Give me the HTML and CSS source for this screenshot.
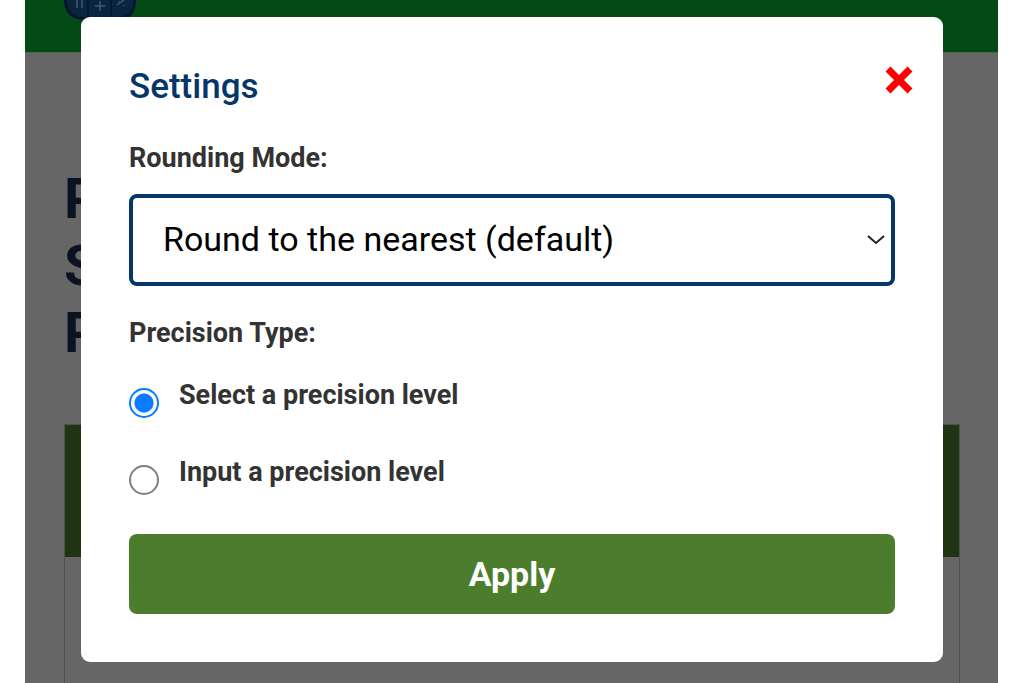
FILE: index.html
```html
<!DOCTYPE html>
<html lang="en">
<head>
<meta charset="utf-8">
<meta name="viewport" content="width=device-width, initial-scale=1">
<title>Settings</title>
<link rel="stylesheet" href="styles.css">
</head>
<body>
<div class="page">
  <header class="topbar">
    <svg class="logo" viewBox="0 0 72 22" aria-hidden="true">
      <path d="M0 0H72C72 13 66 20 54 20H20C7 20 0 12 0 0Z" fill="#07172c"/>
      <path d="M3 0H23V17H19C9 17 4 11 3 0ZM25 0H46V18H25ZM48 0H69C69 11 64 17 54 17H48Z" fill="#092540"/>
      <path d="M13 0V8M18 0V8M31 6H41M36 1V11M53 5L60 0M55 1V2M60 5V6" stroke="#435a6c" stroke-width="1.5" fill="none"/>
    </svg>
  </header>
  <main class="content">
    <h1 class="title">P<br>S<br>P</h1>
    <section class="panel">
      <div class="panel-head"></div>
    </section>
  </main>
</div>
<div class="overlay">
  <form class="modal" role="dialog" aria-labelledby="dialog-title">
    <button class="close" type="button" aria-label="Close">
      <svg class="close-icon" viewBox="0 0 28 28" aria-hidden="true"><path d="M3 3L25 25M25 3L3 25" stroke="#f00" stroke-width="7"/></svg>
    </button>
    <h2 class="heading" id="dialog-title">Settings</h2>
    <label class="label" for="mode">Rounding Mode:</label>
    <div class="select-wrap">
      <select class="select" id="mode"><option>Round to the nearest (default)</option></select>
      <svg class="chevron" viewBox="0 0 18 10" aria-hidden="true"><path d="M1 1L9 8L17 1" stroke="#222" stroke-width="2" fill="none"/></svg>
    </div>
    <fieldset class="group">
      <legend class="label">Precision Type:</legend>
      <div class="option"><input class="radio" type="radio" name="precision" id="select-level" checked><label class="label" for="select-level">Select a precision level</label></div>
      <div class="option"><input class="radio" type="radio" name="precision" id="input-level"><label class="label" for="input-level">Input a precision level</label></div>
    </fieldset>
    <button class="apply" type="button">Apply</button>
  </form>
</div>
</body>
</html>
```
FILE: styles.css
```css
* { box-sizing: border-box; }
body {
  margin: 0;
  background: #fff;
  font-family: Roboto, "Liberation Sans", sans-serif;
  overflow: hidden;
}
.page {
  display: flex;
  flex-direction: column;
  height: 100vh;
  margin: 0 26px 0 25px;
  background: #666;
  overflow: hidden;
}
.topbar {
  flex: none;
  height: 53px;
  padding: 0 39px;
  background: #024a16;
  border-bottom: 1px solid #4a6650;
}
.logo { display: block; width: 72px; height: 22px; }
.content {
  flex: 1;
  display: flex;
  flex-direction: column;
  padding: 113px 38px 0 39px;
}
.title {
  margin: 0 0 57px;
  color: #0b1220;
  font-size: 56px;
  font-weight: 700;
  line-height: 67px;
}
.panel { flex: 1; border: 1px solid #505050; border-bottom: 0; }
.panel-head { height: 132px; background: #1f3412; }
.overlay {
  position: fixed;
  inset: 0;
  display: flex;
  align-items: flex-start;
  justify-content: center;
  padding: 17px 81px 0;
}
.modal {
  position: relative;
  display: flex;
  flex-direction: column;
  width: 100%;
  padding: 48px;
  background: #fff;
  border-radius: 9px;
}
.close {
  position: absolute;
  top: 49px;
  right: 30px;
  padding: 0;
  border: 0;
  background: none;
}
.close-icon { display: block; width: 28px; height: 28px; }
.heading {
  margin: 0 0 34px;
  color: #05366b;
  font-size: 35px;
  font-weight: 500;
  line-height: 44px;
}
.label {
  padding: 0;
  color: #333;
  font-size: 27px;
  font-weight: 700;
  line-height: 30px;
}
.select-wrap { display: grid; align-items: center; margin: 21px 0 32px; }
.select {
  grid-area: 1 / 1;
  width: 100%;
  height: 92px;
  padding: 0 30px 2px;
  appearance: none;
  border: 4px solid #05366b;
  border-radius: 8px;
  background: #fff;
  color: #000;
  font: 400 34px Roboto, "Liberation Sans", sans-serif;
}
.chevron {
  grid-area: 1 / 1;
  justify-self: end;
  width: 18px;
  height: 10px;
  margin-right: 10px;
  pointer-events: none;
}
.group { min-width: 0; margin: 0; padding: 0; border: 0; }
.option {
  display: flex;
  align-items: flex-start;
  gap: 20px;
  height: 45px;
  margin: 32px 0;
}
.radio {
  flex: none;
  width: 30px;
  height: 30px;
  margin: 8px 0 0;
  appearance: none;
  border: 2px solid #808080;
  border-radius: 50%;
  background: #fff;
}
.radio:checked {
  border-color: #0b7bff;
  background: radial-gradient(circle, #0b7bff 9px, #fff 10px);
}
.apply {
  height: 80px;
  padding: 0;
  border: 0;
  border-radius: 8px;
  background: #4b7d2c;
  color: #fff;
  font: 700 34px Roboto, "Liberation Sans", sans-serif;
}
```
